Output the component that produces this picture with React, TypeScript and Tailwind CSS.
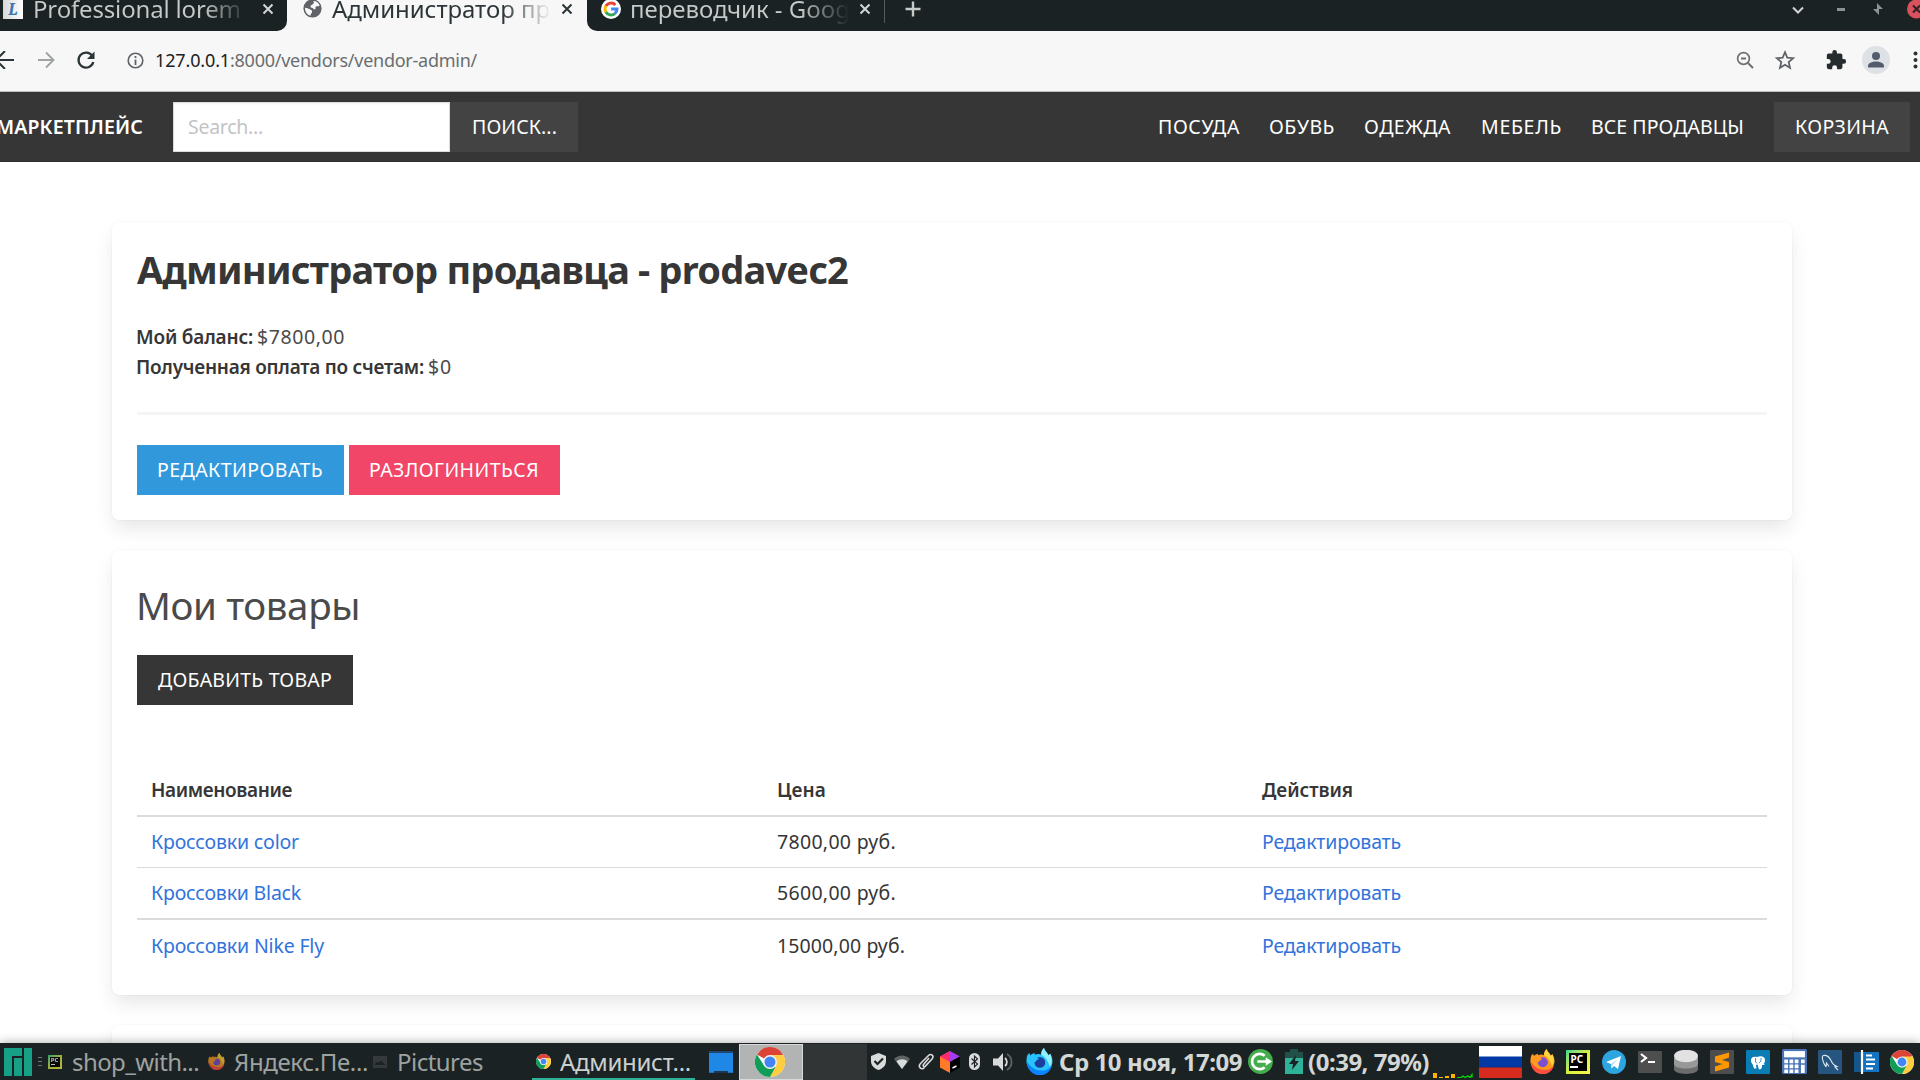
import { useLayoutEffect, useRef, useState } from "react";
import type { ReactNode } from "react";

/* Single line of text whose tracking is computed so that it fills a given width. */
function Fit({ w, className = "", children }: { w: number; className?: string; children: string }) {
  const ref = useRef<HTMLSpanElement>(null);
  const [spacing, setSpacing] = useState(0);
  useLayoutEffect(() => {
    const el = ref.current;
    if (el) setSpacing((w - el.getBoundingClientRect().width) / children.length);
  }, []);
  return (
    <span className={`inline-block shrink-0 whitespace-pre ${className}`} style={{ width: w }}>
      <span ref={ref} className="inline-block" style={{ letterSpacing: spacing }}>
        {children}
      </span>
    </span>
  );
}

function Svg({ size, w, h, box = "0 0 24 24", className = "", children }: { size?: number; w?: number; h?: number; box?: string; className?: string; children: ReactNode }) {
  return (
    <svg width={w ?? size} height={h ?? size} viewBox={box} className={`shrink-0 ${className}`} fill="none">
      {children}
    </svg>
  );
}

function Chrome({ size, className }: { size: number; className?: string }) {
  return (
    <Svg size={size} className={className}>
      <circle cx="12" cy="12" r="12" fill="#fff" />
      <path d="M12 12 1.6 6A12 12 0 0 1 22.4 6z" fill="#db4437" />
      <path d="M12 6.4h10.7A12 12 0 0 1 12 24l5-9.5z" fill="#ffcd40" />
      <path d="M1.6 6 7.2 14.8 12 17.5l4.6-2L12 24A12 12 0 0 1 1.6 6z" fill="#0f9d58" />
      <circle cx="12" cy="12" r="5.6" fill="#f1f1f1" />
      <circle cx="12" cy="12" r="4.4" fill="#4285f4" />
    </Svg>
  );
}

function Firefox({ size, blue, className }: { size: number; blue?: boolean; className?: string }) {
  const a = blue ? "#0a84ff" : "#ff4f3e";
  const b = blue ? "#28c4ff" : "#ff9a1f";
  const c = blue ? "#8ff0ff" : "#ffd43a";
  const d = blue ? "#1b3f9c" : "#7a4fd0";
  return (
    <Svg size={size} className={className}>
      <path d="M1.4 6 3 4.5l.8 2.2C5 5.500 6 5 7.500 4.500L8 6c2-1 4-.8 5.500 0C13.300 3.500 14.500 1.500 16 0c.6 3 3 4 4 6.500L21.500 5c1.500 2.500 2.200 5 2 8A11.600 11.300 0 0 1 .5 13C.3 10 .6 8 1.400 6z" fill={b} />
      <path d="M.5 12C1 19 6 24.300 12 24.300S22 20 23.300 15c-3 4-6 5-9.300 5C8 20 4 17 .5 12z" fill={a} />
      <path d="M16 0c.6 3 3 4 4 6.500l1.500-1.500c1.800 4 2 8-.3 11.500C20 13 18 8 13.500 6 13.300 3.500 14.500 1.500 16 0z" fill={c} />
      <circle cx="12.300" cy="12.800" r="4.800" fill={d} />
      <path d="M4 9c3-2 6 0 8 .5-2 1-3 1-3.500 3C6 13 4.500 11.500 4 9z" fill={b} />
    </Svg>
  );
}

function PyCharm({ className }: { className: string }) {
  return (
    <span className={`flex shrink-0 flex-col bg-linear-to-br from-[#21d789] via-[#d6f03a] to-[#fcf84a] ${className}`}>
      <span className="flex flex-1 flex-col justify-between bg-black px-[8%] pt-[6%] pb-[14%] font-bold text-white">
        <span className="leading-none">PC</span>
        <span className="h-[1.5px] w-1/2 bg-white" />
      </span>
    </span>
  );
}

function Google({ size }: { size: number }) {
  return (
    <Svg size={size} className="h-5 rounded-full bg-white">
      <g strokeWidth="3.6">
        <path d="M17.300 7.200A7.200 7.200 0 0 0 5.800 8.500" stroke="#ea4335" />
        <path d="M5.900 8.300a7.200 7.200 0 0 0 0 7.400" stroke="#fbbc05" />
        <path d="M5.800 15.500a7.200 7.200 0 0 0 10.900 2" stroke="#34a853" />
        <path d="M12.200 12h7a7.200 7.200 0 0 1-2.600 5.600" stroke="#4285f4" />
      </g>
    </Svg>
  );
}

function Cross({ color }: { color: string }) {
  return (
    <Svg size={12} box="0 0 12 12">
      <path d="M1.500 1.500l9 9M10.500 1.500l-9 9" stroke={color} strokeWidth="2" />
    </Svg>
  );
}

function TabBar() {
  return (
    <div className="flex h-[31px] shrink-0 bg-[#f7f7f7] text-[24px] leading-[33px]">
      <div className="flex h-[31px] w-[287px] items-start rounded-br-[10px] bg-[#1b2224] text-[#c6cac8]">
        <div className="ml-[3px] flex h-[19px] w-5 items-center justify-center bg-linear-to-r from-[#d8d8d8] to-white font-serif text-[18px] leading-none font-bold text-[#3f78b0] italic">L</div>
        <div className="-mt-[8px] ml-[10px] w-[219px] bg-linear-to-r from-[#c6cac8] from-78% to-transparent to-98% bg-clip-text text-transparent">
          <Fit w={220}>Professional lorem i</Fit>
        </div>
        <div className="mt-[3px] ml-[10px]"><Cross color="#d3d6d5" /></div>
      </div>
      <div className="flex w-[300px] items-start text-[#2b3436]">
        <Svg size={19} className="mt-[-1px] ml-[16px]">
          <circle cx="12" cy="12" r="11.500" fill="#5f6368" />
          <path d="M13 2.500c4 0 7 2.500 8 6-2 1.500-4 0-5 1.500s1 2.500-1 3-2-2-4-2-2-3 0-3.500 1-2 3-2zM2.500 11c3 0 4 1 6 2s3 1 3 3-2 2-2 5C5 20 2.500 16 2.500 11z" fill="#f7f7f7" />
        </Svg>
        <div className="-mt-[8px] ml-[10px] w-[219px] bg-linear-to-r from-[#2b3436] from-78% to-transparent to-100% bg-clip-text text-transparent">
          <Fit w={218}>Администратор пр</Fit>
        </div>
        <div className="mt-[3px] ml-[10px]"><Cross color="#2b3436" /></div>
      </div>
      <div className="flex flex-1 items-start rounded-bl-[10px] bg-[#1b2224] text-[#c6cac8]">
        <div className="mt-[-1px] ml-[14px]"><Google size={20} /></div>
        <div className="-mt-[8px] ml-[9px] w-[219px] bg-linear-to-r from-[#c6cac8] from-78% to-transparent to-100% bg-clip-text text-transparent">
          <Fit w={220}>переводчик - Goog</Fit>
        </div>
        <div className="mt-[3px] ml-[10px]"><Cross color="#d3d6d5" /></div>
        <div className="ml-[13px] h-[23px] w-px bg-[#575d5f]" />
        <Svg size={16} box="0 0 16 16" className="mt-[1px] ml-[20px]">
          <path d="M8 .5v15M.5 8h15" stroke="#c6cac8" strokeWidth="2.400" />
        </Svg>
        <div className="flex-1" />
        <Svg size={12} box="0 0 12 12" className="mt-[4px]">
          <path d="M1 3.500l5 5 5-5" stroke="#d3d6d5" strokeWidth="2" />
        </Svg>
        <div className="mt-[8px] ml-[33px] h-[3px] w-2 bg-[#8d9293]" />
        <Svg size={12} box="0 0 12 12" className="mt-[3px] ml-[27px]">
          <path d="M5 0l6 6H5zM7 12L1 6h6z" fill="#8d9293" />
        </Svg>
        <Svg w={13} h={19} box="0 0 13 19" className="ml-[23px]">
          <circle cx="9.500" cy="9" r="9.500" fill="#d9515d" />
          <path d="M6 5.500l7 7M13 5.500l-7 7" stroke="#2b2326" strokeWidth="2" />
        </Svg>
      </div>
    </div>
  );
}

function Toolbar() {
  return (
    <div className="flex h-[61px] shrink-0 items-center overflow-hidden border-b border-[#bdbdbd] bg-[#f7f7f7] pb-[2px]">
      <Svg w={14} h={18} box="0 0 14 18">
        <path d="M14 9H-4M5-0L-4 9l9 9" stroke="#2b3436" strokeWidth="2" />
      </Svg>
      <Svg size={18} box="0 0 18 18" className="ml-[23px]">
        <path d="M1 9h15M9 1.500L16.500 9 9 16.500" stroke="#9fa3a4" strokeWidth="1.900" />
      </Svg>
      <Svg size={20} box="0 0 20 20" className="ml-[21px]">
        <path d="M16.200 5.800A7.500 7.500 0 1 0 17.300 12" stroke="#2b3436" strokeWidth="2.300" />
        <path d="M18.500 1.500V9H11z" fill="#2b3436" />
      </Svg>
      <Svg size={17} box="0 0 17 17" className="mt-[1px] ml-[31px]">
        <circle cx="8.500" cy="8.500" r="7.300" stroke="#5f6368" strokeWidth="1.600" />
        <path d="M8.500 7.500V13M8.500 4v2" stroke="#5f6368" strokeWidth="1.800" />
      </Svg>
      <div className="ml-[11px] flex text-[18px]">
        <Fit w={75} className="text-[#202124]">127.0.0.1</Fit>
        <Fit w={247} className="text-[#6a6e70]">:8000/vendors/vendor-admin/</Fit>
      </div>
      <div className="flex-1" />
      <Svg size={18} box="0 0 18 18">
        <circle cx="7.500" cy="7.500" r="5.900" stroke="#6d7174" strokeWidth="1.700" />
        <path d="M5 7.500h5M11.700 11.700L17 17" stroke="#6d7174" strokeWidth="2" />
      </Svg>
      <Svg size={22} className="ml-[20px]">
        <path d="M12 3.500l2.500 6 6.400.5-4.900 4.200 1.500 6.300L12 17.100l-5.500 3.400L8 14.200 3.100 10l6.400-.5z" stroke="#5f6368" strokeWidth="1.900" />
      </Svg>
      <Svg size={22} className="ml-[29px]">
        <path d="M20.500 11H19V7a2 2 0 0 0-2-2h-4V3.500a2.500 2.500 0 0 0-5 0V5H4a2 2 0 0 0-2 2v3.800h1.500a2.700 2.700 0 0 1 0 5.400H2V20a2 2 0 0 0 2 2h3.800v-1.500a2.700 2.700 0 0 1 5.400 0V22H17a2 2 0 0 0 2-2v-4h1.500a2.500 2.500 0 0 0 0-5z" fill="#242c2e" />
      </Svg>
      <Svg size={28} box="0 0 28 28" className="ml-[15px]">
        <circle cx="14" cy="14" r="14" fill="#dee1e6" />
        <circle cx="14" cy="10" r="4" fill="#525c6e" />
        <path d="M6 21.500v-1.500c0-3 4-4.500 8-4.500s8 1.500 8 4.500v1.500z" fill="#525c6e" />
      </Svg>
      <Svg w={8} h={18} box="0 0 8 18" className="ml-[22px]">
        <g fill="#2b3436"><circle cx="3.500" cy="2.500" r="2" /><circle cx="3.500" cy="9" r="2" /><circle cx="3.500" cy="15.500" r="2" /></g>
      </Svg>
    </div>
  );
}

function NavBar() {
  return (
    <nav className="flex h-[70px] shrink-0 items-center overflow-hidden border-b border-[#2e2e2e] bg-[#363636] text-[19.5px] text-white">
      <Fit w={147} className="-ml-[4px] font-semibold">МАРКЕТПЛЕЙС</Fit>
      <div className="ml-[30px] flex h-[50px] w-[277px] items-center border border-[#dbdbdb] bg-white pl-[14px] text-[#c3c3c3] shadow-[inset_0_1px_2px_rgba(10,10,10,0.05)]">
        <Fit w={75}>Search...</Fit>
      </div>
      <div className="flex h-[50px] w-[128px] items-center bg-[#434343] pl-[22px]">
        <Fit w={85}>ПОИСК...</Fit>
      </div>
      <div className="flex-1" />
      <Fit w={82} className="mr-[29px]">ПОСУДА</Fit>
      <Fit w={66} className="mr-[29px]">ОБУВЬ</Fit>
      <Fit w={87} className="mr-[30px]">ОДЕЖДА</Fit>
      <Fit w={81} className="mr-[29px]">МЕБЕЛЬ</Fit>
      <Fit w={153} className="mr-[30px]">ВСЕ ПРОДАВЦЫ</Fit>
      <div className="mr-[10px] flex h-[50px] w-[136px] items-center bg-[#434343] pl-[21px]">
        <Fit w={94}>КОРЗИНА</Fit>
      </div>
    </nav>
  );
}

const box = "mx-[112px] w-[1680px] shrink-0 rounded-[7.5px] bg-white px-[25px] shadow-[0_10px_20px_-2.5px_rgba(10,10,10,0.1),0_0_0_1px_rgba(10,10,10,0.02)]";

const rows = [
  { name: "Кроссовки color", nameW: 148, price: "7800,00 руб.", priceW: 119, line: "border-b h-[51px]" },
  { name: "Кроссовки Black", nameW: 150, price: "5600,00 руб.", priceW: 119, line: "border-b-2 h-[52px]" },
  { name: "Кроссовки Nike Fly", nameW: 173, price: "15000,00 руб.", priceW: 128, line: "h-[51px]" },
];

function Page() {
  return (
    <main className="flex min-h-0 flex-1 flex-col overflow-hidden bg-white pt-[60px] text-[19.5px] leading-[30px] text-[#4a4a4a]">
      <section className={`${box} h-[298px] pt-[25px]`}>
        <h1 className="h-[45px] text-[38px] leading-[45px] font-bold text-[#363636]">
          <Fit w={711}>Администратор продавца - prodavec2</Fit>
        </h1>
        <div className="mt-[30px] -ml-px flex gap-[4px]">
          <Fit w={117} className="text-[19px] font-semibold text-[#363636]">Мой баланс:</Fit>
          <Fit w={88}>$7800,00</Fit>
        </div>
        <div className="-ml-px flex gap-[4px]">
          <Fit w={288} className="text-[19px] font-semibold text-[#363636]">Полученная оплата по счетам:</Fit>
          <Fit w={24}>$0</Fit>
        </div>
        <div className="mt-[30px] h-[3px] bg-[#f5f5f5]" />
        <div className="mt-[30px] flex gap-[5px] leading-[50px] text-white">
          <div className="h-[50px] w-[207px] bg-[#3298dc] pl-[20px]"><Fit w={166}>РЕДАКТИРОВАТЬ</Fit></div>
          <div className="h-[50px] w-[211px] bg-[#f14668] pl-[20px]"><Fit w={170}>РАЗЛОГИНИТЬСЯ</Fit></div>
        </div>
      </section>

      <section className={`${box} mt-[30px] h-[445px] pt-[25px]`}>
        <h2 className="-ml-px h-[60px] text-[38.5px] leading-[61px]"><Fit w={224}>Мои товары</Fit></h2>
        <div className="mt-[20px] h-[50px] w-[216px] bg-[#363636] pl-[21px] leading-[50px] text-white">
          <Fit w={174}>ДОБАВИТЬ ТОВАР</Fit>
        </div>
        <div className="mt-[60px] flex h-[52px] items-center border-b-2 border-[#dbdbdb] pl-[14px] text-[19px] font-semibold text-[#363636]">
          <div className="w-[626px]"><Fit w={141}>Наименование</Fit></div>
          <div className="w-[485px]"><Fit w={49}>Цена</Fit></div>
          <Fit w={91}>Действия</Fit>
        </div>
        {rows.map((r) => (
          <div key={r.name} className={`flex items-center border-[#dbdbdb] pl-[14px] text-[#363636] ${r.line}`}>
            <div className="w-[626px] text-[#3273dc]"><Fit w={r.nameW}>{r.name}</Fit></div>
            <div className="w-[485px]"><Fit w={r.priceW}>{r.price}</Fit></div>
            <Fit w={139} className="text-[#3273dc]">Редактировать</Fit>
          </div>
        ))}
      </section>

      <section className={`${box} mt-[30px] h-[200px]`} />
    </main>
  );
}

function Taskbar() {
  return (
    <footer className="relative flex h-[37px] shrink-0 items-center bg-[#1b2224] text-[24px] leading-[37px] text-[#9ea2a1] shadow-[0_0_10px_rgba(0,0,0,0.35)]">
      <Svg size={28} box="0 0 28 28" className="ml-[4px]">
        <path d="M0 0h18v8H8v20H0zM10 10h8v18h-8zM20 0h8v28h-8z" fill="#16a085" />
      </Svg>
      <Svg w={4} h={9} box="0 0 4 9" className="ml-[6px]"><path d="M0 .5h4M0 4.500h4M0 8.500h4" stroke="#6f7475" /></Svg>
      <PyCharm className="ml-[6px] size-[14px] p-[2px] text-[6px] opacity-70" />
      <Fit w={127} className="ml-[10px]">shop_with...</Fit>
      <Firefox size={17} className="ml-[9px] opacity-70" />
      <Fit w={134} className="ml-[9px]">Яндекс.Пе...</Fit>
      <Svg w={14} h={12} box="0 0 14 12" className="ml-[5px]">
        <path d="M0 0h14v12H0z" fill="#343a3c" /><path d="M2 9c0-3 3-4 4-2 1-3 4-2 4 0 2 0 2 1 2 2z" fill="#1b2224" />
      </Svg>
      <Fit w={86} className="ml-[10px]">Pictures</Fit>
      <div className="ml-[49px] flex h-[37px] w-[163px] items-center border-b-2 border-[#2eb398] pt-[2px] text-[#cbd0ce]">
        <Chrome size={15} className="ml-[4px]" />
        <Fit w={131} className="ml-[9px]">Админист...</Fit>
      </div>
      <Svg w={26} h={22} box="0 0 26 22" className="ml-[13px]">
        <path d="M1 0h24v3H1z" fill="#20466f" /><path d="M1 2h24v20H1z" fill="#1f87e5" /><path d="M6 22v-2h14v2z" fill="#1b3552" /><path d="M0 20v2h26v-2" stroke="#1b3552" strokeWidth=".5" />
      </Svg>
      <div className="mt-px ml-[5px] flex h-[36px] w-[64px] items-center justify-center border border-[#d8d9d9] bg-[#b2b3b3] pr-[2px]"><Chrome size={30} /></div>
      <div className="mt-px h-[36px] w-[64px] bg-[#313535]" />

      <Svg w={15} h={17} box="0 0 15 17" className="ml-[4px]">
        <path d="M7.500 0L15 3v5c0 5-3.500 7.500-7.500 9C3.500 15.500 0 13 0 8V3z" fill="#d9dbdb" /><path d="M3.500 8l3 3 5.500-5.500" stroke="#1b2224" strokeWidth="2.200" />
      </Svg>
      <Svg w={16} h={14} box="0 0 16 14" className="ml-[8px]">
        <path d="M0 4C4-.8 12-.8 16 4L8 14z" fill="#5e6465" /><path d="M2.500 6.500c3-3 8-3 11 0L8 14z" fill="#d9dbdb" />
      </Svg>
      <Svg w={16} h={17} box="0 0 16 17" className="ml-[8px]">
        <path d="M11 5L5.500 11.500c-1 1.500.7 2.800 1.900 1.600L14 6c2.500-3-.8-6-3.500-3.500L2.500 10.500C-.5 14 3.500 17.500 6.500 14.500" stroke="#d9dbdb" strokeWidth="1.600" />
      </Svg>
      <Svg w={20} h={22} box="0 0 20 22" className="ml-[6px]">
        <path d="M10 0L0 5.500v11L10 11z" fill="#ff2e88" /><path d="M10 0l10 5.500L10 11 3 4z" fill="#a43cf0" /><path d="M10 0v11L0 5.500z" fill="#fb2b6e" /><path d="M0 5.500L10 11v11L0 16.500z" fill="#ff7a2a" /><path d="M20 5.500v11L10 22V11z" fill="#000" /><path d="M12.500 17l4-2" stroke="#fff" strokeWidth="1.500" />
      </Svg>
      <Svg w={11} h={17} box="0 0 11 17" className="ml-[9px]">
        <rect width="11" height="17" rx="5.500" fill="#d9dbdb" /><path d="M2.500 5.500l6 5.500-3 3V3l3 3-6 5.500" stroke="#1b2224" strokeWidth="1.100" />
      </Svg>
      <Svg w={20} h={20} box="0 0 20 20" className="ml-[13px]">
        <path d="M0 6.500h5L10 1v18l-5-5.500H0z" fill="#d9dbdb" /><path d="M12 6c2.500 2 2.500 6 0 8" stroke="#d9dbdb" strokeWidth="1.800" /><path d="M14 2c6 3.500 6 12.500 0 16" stroke="#5e6465" strokeWidth="1.800" />
      </Svg>
      <Firefox size={27} blue className="ml-[13px]" />
      <Fit w={183} className="ml-[6px] font-bold text-[#d3d7d5]">Ср 10 ноя, 17:09</Fit>
      <Svg size={25} className="ml-[6px]">
        <circle cx="12" cy="12" r="12" fill="#43ad4c" /><path d="M16 6.500A7.300 7.300 0 1 0 16 17.500M9 12h9" stroke="#fff" strokeWidth="2.600" /><path d="M17 8l6 4-6 4z" fill="#fff" />
      </Svg>
      <Svg w={18} h={25} box="0 0 18 25" className="ml-[12px]">
        <path d="M0 3h5V0h8v3h5v8H0z" fill="#215149" /><path d="M0 9h18v16H0z" fill="#2eb398" /><path d="M11 6L4 15h4l-1 6 7-9h-4z" fill="#1b2224" />
      </Svg>
      <Fit w={121} className="ml-[5px] font-bold text-[#d3d7d5]">(0:39, 79%)</Fit>
      <Svg w={40} h={5} box="0 0 40 5" className="mt-[28px] ml-[4px]">
        <path d="M0 0h4v5H0zM6 4h4v1H6zM12 3h4v2h-4zM18 1h4v4h-4z" fill="#ffb300" /><path d="M24 4.500h4l2-1.500 2 1.500 3-1.500 2 1.500 2-3V4.500" stroke="#00e000" strokeWidth="1.200" />
      </Svg>
      <Svg w={43} h={32} box="0 0 43 32" className="ml-[6px]">
        <path d="M0 0h43v11H0z" fill="#fff" /><path d="M0 10.500h43v11H0z" fill="#0039a6" /><path d="M0 21.500h43V32H0z" fill="#d52b1e" />
      </Svg>
      <Firefox size={25} className="ml-[8px]" />
      <PyCharm className="ml-[11px] size-6 p-[3px] text-[10px]" />
      <Svg size={24} className="ml-[12px]">
        <circle cx="12" cy="12" r="12" fill="#2ca5e0" /><path d="M4 12L19 6l-3 13-4-3-2.500 2.500-.5-4.500L4 12z" fill="#fff" /><path d="M9 14l7-5.500-5.500 6.500-1 3z" fill="#b9d8ea" />
      </Svg>
      <Svg size={24} className="ml-[12px]">
        <rect y="1" width="24" height="22" rx="1" fill="#4e4e4e" /><path d="M3 4l5 4-5 4M10 12h7" stroke="#fff" strokeWidth="2.200" />
      </Svg>
      <Svg size={24} className="ml-[12px]">
        <path d="M0 15v4c0 6.500 24 6.500 24 0v-4z" fill="#6c6c6c" /><path d="M0 8v6c0 6 24 6 24 0V8z" fill="#989898" /><ellipse cx="12" cy="6" rx="12" ry="6.200" fill="#e2e2e2" />
      </Svg>
      <Svg size={24} className="ml-[12px]">
        <rect width="24" height="24" rx="1" fill="#4d4d4d" /><path d="M5 6.500L19 2.500v5l-7 2.500 7 2v5.500L5 21.500v-5l7.500-2.500L5 12z" fill="#ff9800" />
      </Svg>
      <Svg size={24} className="ml-[12px]">
        <rect width="24" height="24" rx="1" fill="#0a7db5" />
        <path d="M5 10c0-3 3-4 6-3 4-1.500 8-.5 8 3 0 2-.5 3-1.500 4l1.500 1h-3v2c-.5 3-3.500 3-3.500 1l-1-3.500-1.500.5.500 3.500H8L6.500 14C5.500 13 5 12 5 10z" fill="#fff" />
        <path d="M9.500 8v4l1.500 1.500M15 8v3l-2 2" stroke="#0a7db5" strokeWidth=".8" />
      </Svg>
      <Svg size={25} box="0 0 24 24" className="ml-[12px]">
        <rect width="24" height="24" rx="1.500" fill="#4a73b8" />
        <path d="M2 2h20v6H2z" fill="#fff" />
        <path d="M4 10v13M9 10v13M14 10v13" stroke="#fff" strokeWidth="3.600" strokeDasharray="3.600 1.200" />
        <path d="M20 10v3.600M20 15v8" stroke="#fff" strokeWidth="3.600" />
      </Svg>
      <Svg size={24} className="ml-[11px]">
        <rect width="24" height="24" rx="1" fill="#26557f" /><path d="M8 17C5 13 3 6 5.500 5.500c3-.5 6 2 7.500 5 1.500 3.500 3 5 6 6l-2 .5 3 3M8 17l.5-4 2.500 3.500" stroke="#dbe7f0" strokeWidth="1.100" />
      </Svg>
      <Svg w={25} h={24} box="0 0 25 24" className="ml-[12px]">
        <path d="M0 2h7v20H0z" fill="#15578c" /><path d="M9 2h16v20H9z" fill="#1273c0" /><path d="M8 0v24" stroke="#fff" strokeWidth="2.200" /><path d="M12 5.500h6M12 9.500h9M12 14h9M12 18.500h7" stroke="#fff" strokeWidth="2.200" />
      </Svg>
      <Chrome size={24} className="ml-[11px]" />
    </footer>
  );
}

export default function App() {
  return (
    <div className="flex h-[1080px] w-[1920px] flex-col overflow-hidden bg-white font-['Noto_Sans',sans-serif]">
      <TabBar />
      <Toolbar />
      <NavBar />
      <Page />
      <Taskbar />
    </div>
  );
}
